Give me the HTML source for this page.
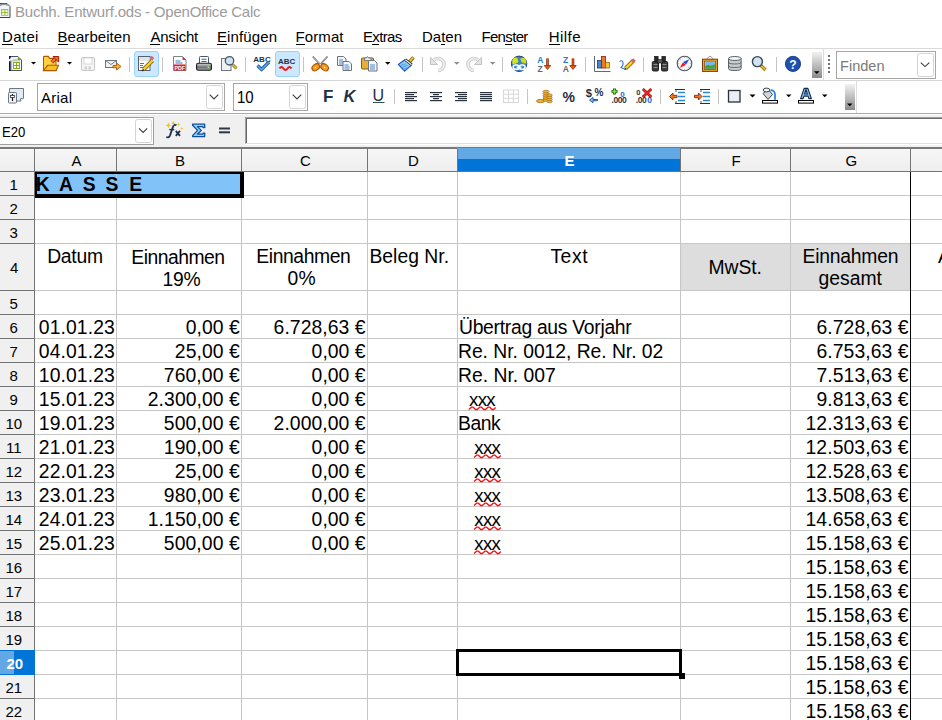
<!DOCTYPE html>
<html><head><meta charset="utf-8"><style>
html,body{margin:0;padding:0;}
body{width:942px;height:720px;overflow:hidden;position:relative;background:#fff;font-family:"Liberation Sans", sans-serif;}
body>div{position:absolute;}
.t{line-height:1;white-space:pre;}
</style></head><body>
<div style="left:0px;top:48px;width:942px;height:1px;background:#dadada"></div>
<div style="left:0px;top:80px;width:942px;height:1px;background:#d6d6d6"></div>
<div style="left:836px;top:51px;width:100px;height:28px;background:#fff;border:1px solid #a6a6a6;box-sizing:border-box"></div>
<div style="left:37px;top:83px;width:188px;height:28px;background:#fff;border:1px solid #a6a6a6;box-sizing:border-box"></div>
<div style="left:233px;top:83px;width:75px;height:28px;background:#fff;border:1px solid #a6a6a6;box-sizing:border-box"></div>
<div style="left:0px;top:113px;width:942px;height:1px;background:#a9a9a9"></div>
<div style="left:0px;top:115px;width:942px;height:32px;background:#f0f0f0"></div>
<div style="left:0px;top:117px;width:154px;height:28px;background:#fff;border:1px solid #a0a0a0;box-sizing:border-box;border-left:0"></div>
<div style="left:0px;top:114px;width:942px;height:1px;background:#ffffff"></div>
<div style="left:245px;top:117px;width:697px;height:27px;background:#fff;border-top:1px solid #a0a0a0;border-left:1px solid #a0a0a0;border-bottom:1px solid #e0e0e0;box-shadow:inset 1px 1px 0 #696969;box-sizing:border-box"></div>
<div style="left:245px;top:144px;width:697px;height:1px;background:#ffffff"></div>
<div style="left:0px;top:147px;width:942px;height:2px;background:#7a7a7a"></div>
<svg style="position:absolute;left:0;top:0" width="20" height="24" viewBox="0 0 20 24"><path d="M-1 3.5h8l3 3v11h-11z" fill="#f2f4f6" stroke="#3a4450"/><path d="M-1 6q4-3 9-1" stroke="#8a949e" stroke-width="1.5" fill="none"/><rect x="1.2" y="9.2" width="7" height="6.5" fill="#8ab51e"/><rect x="2.2" y="10.2" width="2.2" height="2" fill="#fff"/><rect x="5.4" y="10.2" width="2.2" height="2" fill="#fff"/><rect x="2.2" y="13.1" width="2.2" height="2" fill="#fff"/><rect x="5.4" y="13.1" width="2.2" height="2" fill="#fff"/></svg><svg style="position:absolute;left:0;top:48px" width="942" height="100" viewBox="0 48 942 100"><path d="M9.5 56.5h8.5l3.5 3.5v10.5h-12z" fill="#f6f8fa" stroke="#4a5560"/><rect x="9" y="56" width="1.8" height="15" fill="#0c1a2a"/><rect x="10.8" y="61" width="1.4" height="9" fill="#a8c0d8"/><path d="M10.5 57.5h7l2.5 2.5v1.5h-9.5z" fill="#c4ccd4"/><path d="M7.5 62q5-4 12-4.2M9 59.8q4-2 8-2" stroke="#fff" stroke-width="1.1" fill="none"/><path d="M18 56.5l3.5 3.5h-3.5z" fill="#7a9a20"/><rect x="13" y="62" width="7" height="7" fill="#8aae10"/><rect x="14" y="63" width="2" height="2" fill="#fff"/><rect x="17" y="63" width="2" height="2" fill="#fff"/><rect x="14" y="66" width="2" height="2" fill="#fff"/><rect x="17" y="66" width="2" height="2" fill="#fff"/><path d="M31 62h5l-2.5 2.5z" fill="#000"/><path d="M43.5 57.2q0-0.8 0.8-0.8h4.2l1 2h6.5v12h-12.5z" fill="#ffd040" stroke="#b05a00" stroke-width="1.1"/><path d="M47.6 65.3h11l-2.6 5.3h-12.5z" fill="#f8c020" stroke="#b05a00" stroke-width="1.1"/><path d="M51.8 62.2l4-4" stroke="#a02000" stroke-width="3.6"/><path d="M52 62l3.8-3.8" stroke="#f88030" stroke-width="1.8"/><path d="M53 56.5h5.7v5.7z" fill="#f07020" stroke="#a02000" stroke-width="1"/><path d="M67 62h5l-2.5 2.5z" fill="#000"/><rect x="81.5" y="57.5" width="13" height="13" rx="1.5" fill="#f4f4f4" stroke="#c8c8c8"/><rect x="84" y="58" width="8" height="6" fill="#fff" stroke="#d0d0d0" stroke-width="0.8"/><rect x="84.5" y="66.5" width="2.5" height="3" fill="#d0d0d0"/><rect x="88.5" y="66.5" width="2.5" height="3" fill="#d0d0d0"/><rect x="105.5" y="60.5" width="11" height="7" fill="#eef1f4" stroke="#6c7680"/><path d="M105.5 60.5l5.5 4 5.5-4" fill="none" stroke="#6c7680" stroke-width="0.9"/><path d="M113 65.5h3.5v-2.5l4.5 3.5-4.5 3.5v-2.3h-3.5z" fill="#f7b23a" stroke="#a85a10" stroke-width="0.9"/><rect x="129" y="57" width="1" height="15" fill="#c4c4c4"/><rect x="134.5" y="51.5" width="24" height="25" rx="2.5" fill="#cce8ff" stroke="#99d1ff"/><rect x="138.5" y="56.5" width="11.5" height="14" fill="#fff" stroke="#56606a"/><rect x="139" y="57" width="10.5" height="4" fill="#dfe4ea"/><path d="M140 63.5h4M140 65.5h3M140 67.5h4" stroke="#3a7ac8" stroke-width="1"/><path d="M143.5 69.5l9-9" stroke="#8a6a10" stroke-width="4"/><path d="M143.5 69.5l9-9" stroke="#f8d030" stroke-width="2.4"/><path d="M151 59l2-2" stroke="#e06070" stroke-width="3.5"/><path d="M142 71l1.6-1.6" stroke="#222" stroke-width="1.4"/><rect x="162" y="57" width="1" height="15" fill="#c4c4c4"/><path d="M173.5 56.5h9l3.5 3.5v10.5h-12.5z" fill="#fff" stroke="#7a8590"/><path d="M182.5 56.5l3.5 3.5h-3.5z" fill="#e03030"/><path d="M175.5 61h5M175.5 63h7" stroke="#3a7ac8" stroke-width="1"/><rect x="174" y="64.5" width="11.5" height="6" fill="#d81e1e"/><text x="179.8" y="69.8" font-size="5.2" font-weight="700" fill="#fff" text-anchor="middle" font-family="Liberation Sans">PDF</text><defs><linearGradient id="gp" x1="0" y1="0" x2="0" y2="1"><stop offset="0" stop-color="#dcdcdc"/><stop offset="0.55" stop-color="#6e7276"/><stop offset="1" stop-color="#a8aaac"/></linearGradient><linearGradient id="gh" x1="0" y1="0" x2="0" y2="1"><stop offset="0" stop-color="#f2f2f2"/><stop offset="1" stop-color="#8a8a8a"/></linearGradient><radialGradient id="gg" cx="0.4" cy="0.35" r="0.7"><stop offset="0" stop-color="#60a0e0"/><stop offset="1" stop-color="#1c4c9a"/></radialGradient></defs><rect x="199.5" y="56.5" width="9" height="8" rx="0.8" fill="#fff" stroke="#4a5a6a"/><path d="M201.5 59.3h5M201.5 61.5h5" stroke="#2a6ab0" stroke-width="1.1"/><rect x="196.6" y="63.3" width="14.8" height="7" rx="1.6" fill="url(#gp)" stroke="#1a1a1a" stroke-width="1.1"/><circle cx="208.5" cy="67.3" r="1" fill="#80ff30"/><rect x="221.5" y="58.5" width="9.5" height="12" fill="#eef2f6" stroke="#6a7580"/><path d="M232.5 64.5l4 4" stroke="#8a6a10" stroke-width="3"/><path d="M232.7 64.7l3.6 3.6" stroke="#f0c030" stroke-width="1.6"/><circle cx="229.5" cy="60.8" r="4.2" fill="#cfe3f4" stroke="#4a5866" stroke-width="1.3"/><rect x="245" y="57" width="1" height="15" fill="#c4c4c4"/><text x="262" y="62.3" font-size="8" font-weight="700" fill="#1e3246" text-anchor="middle" font-family="Liberation Sans">ABC</text><path d="M257.5 65.5l4 4 7.5-7.5" fill="none" stroke="#1e4e8e" stroke-width="3.2"/><path d="M257.5 65.5l4 4 7.5-7.5" fill="none" stroke="#5aaaf0" stroke-width="1.6"/><rect x="275.5" y="51.5" width="24" height="25" rx="2.5" fill="#cce8ff" stroke="#99d1ff"/><text x="286.7" y="63.5" font-size="8" font-weight="700" fill="#1e3246" text-anchor="middle" font-family="Liberation Sans">ABC</text><path d="M279.5 68.5q2-3 4 0t4 0t4 0" fill="none" stroke="#e81818" stroke-width="2"/><rect x="303" y="57" width="1" height="15" fill="#c4c4c4"/><path d="M312.8 56.5l6.8 7.5M327.5 56.5l-6.8 7.5" stroke="#6a7078" stroke-width="1.8"/><path d="M312.8 56.5l6.8 7.5M327.5 56.5l-6.8 7.5" stroke="#d8dce0" stroke-width="0.6"/><ellipse cx="315.8" cy="67.3" rx="4.2" ry="3" transform="rotate(-38 315.8 67.3)" fill="#f39a20" stroke="#a85000" stroke-width="1.1"/><ellipse cx="324.6" cy="67.3" rx="4.2" ry="3" transform="rotate(38 324.6 67.3)" fill="#f39a20" stroke="#a85000" stroke-width="1.1"/><circle cx="315.5" cy="67.5" r="0.8" fill="#fff"/><circle cx="324.8" cy="67.5" r="0.8" fill="#fff"/><path d="M337.5 56.5h6l2.5 2.5v6.5h-8.5z" fill="#f4f6f8" stroke="#6a7580"/><path d="M339.0 60.0h4M339.0 62.0h5M339.0 64.0h5" stroke="#3a7ac8" stroke-width="0.9"/><path d="M343 61.5h6l2.5 2.5v6.5h-8.5z" fill="#f4f6f8" stroke="#6a7580"/><path d="M344.5 65.0h4M344.5 67.0h5M344.5 69.0h5" stroke="#3a7ac8" stroke-width="0.9"/><rect x="361.5" y="58" width="12" height="11" rx="1" fill="#e8b030" stroke="#8a5a10"/><path d="M364.5 60.5h7l-1-2.5h-1.8l-1.2-1.5-1.2 1.5h-1.8z" fill="#eaeaea" stroke="#606a74" stroke-width="0.8"/><path d="M368.5 60.5h6l2.5 2.5v8h-8.5z" fill="#f4f6f8" stroke="#6a7580"/><path d="M370 65h5M370 67h5M370 69h5" stroke="#3a7ac8" stroke-width="0.9"/><path d="M385 62h5.5l-2.75 2.75z" fill="#000"/><path d="M409.5 61.8l4-4.5" stroke="#7a5a08" stroke-width="3.4"/><path d="M409.6 61.7l3.8-4.3" stroke="#f0c030" stroke-width="1.8"/><path d="M398.3 64.4l6.6-4.7 6.6 5.4-6.9 6.1z" fill="#8ccaf4" stroke="#1050c0" stroke-width="1.1" stroke-linejoin="round"/><path d="M400.5 65.5l5 -1.5M401.5 67.5l6-2M403 69.3l5-1.5" stroke="#4a90e0" stroke-width="0.8"/><path d="M405.2 59.4l6.6 5.4" stroke="#1a1a1a" stroke-width="2.6"/><path d="M405.4 59.7l6.2 5" stroke="#f0f0f0" stroke-width="1.2"/><rect x="422" y="57" width="1" height="15" fill="#c4c4c4"/><path d="M432 64.5a6 6 0 1 1 6 6" fill="none" stroke="#c8c8c8" stroke-width="3.6"/><path d="M432 64.5a6 6 0 1 1 6 6" fill="none" stroke="#ececec" stroke-width="2"/><path d="M430.5 57.5v7h7z" fill="#e4e4e4" stroke="#c4c4c4"/><path d="M454 62h5.5l-2.75 2.75z" fill="#8c8c8c"/><path d="M480 64.5a6 6 0 1 0 -6 6" fill="none" stroke="#c8c8c8" stroke-width="3.6"/><path d="M480 64.5a6 6 0 1 0 -6 6" fill="none" stroke="#ececec" stroke-width="2"/><path d="M481.5 57.5v7h-7z" fill="#e4e4e4" stroke="#c4c4c4"/><path d="M490 62h5.5l-2.75 2.75z" fill="#8c8c8c"/><rect x="502" y="57" width="1" height="15" fill="#c4c4c4"/><circle cx="519.1" cy="63.8" r="7.7" fill="#3c82c8" stroke="#10386a" stroke-width="0.9"/><path d="M513 58.5q2-1.5 4-1 1 2 1.5 4.5 -2 1.8-6 2.2q-1-3 0.5-5.7z" fill="#d4e418"/><path d="M520.5 58.5q3-1.5 5 0.5 1.2 2 1 4.5q-3 0-5 -1.2-1-2-1-3.8z" fill="#c8dc20"/><rect x="513.2" y="65" width="5.6" height="4.4" rx="2.2" fill="none" stroke="#fff" stroke-width="1.7"/><rect x="519.4" y="65" width="5.6" height="4.4" rx="2.2" fill="none" stroke="#fff" stroke-width="1.7"/><path d="M516.5 67.2h5" stroke="#fff" stroke-width="1.4"/><text x="540.2" y="62.6" font-size="8.5" font-weight="700" fill="#1a78d8" text-anchor="middle" font-family="Liberation Sans">A</text><text x="540.2" y="71.6" font-size="8.5" font-weight="700" fill="#5e666e" text-anchor="middle" font-family="Liberation Sans">Z</text><path d="M547.5 58.5v8" stroke="#8a2a08" stroke-width="2.6"/><path d="M547.5 58.5v8" stroke="#f05a10" stroke-width="1.2"/><path d="M544.3 65.5h6.4l-3.2 4z" fill="#f05a10" stroke="#8a2a08" stroke-width="0.8"/><text x="565.7" y="62.6" font-size="8.5" font-weight="700" fill="#1a78d8" text-anchor="middle" font-family="Liberation Sans">Z</text><text x="565.7" y="71.6" font-size="8.5" font-weight="700" fill="#5e666e" text-anchor="middle" font-family="Liberation Sans">A</text><path d="M573.0 58.5v8" stroke="#8a2a08" stroke-width="2.6"/><path d="M573.0 58.5v8" stroke="#f05a10" stroke-width="1.2"/><path d="M569.8 65.5h6.4l-3.2 4z" fill="#f05a10" stroke="#8a2a08" stroke-width="0.8"/><rect x="585" y="57" width="1" height="15" fill="#c4c4c4"/><path d="M594.5 56v15.5h16" fill="none" stroke="#606a74" stroke-width="1"/><rect x="597.5" y="60.5" width="4" height="7.5" fill="#4a88c8" stroke="#1e3a60" stroke-width="0.8"/><rect x="601.5" y="56.5" width="4" height="11.5" fill="#f07820" stroke="#902010" stroke-width="0.8"/><rect x="605.5" y="62.5" width="4" height="5.5" fill="#f8c830" stroke="#906010" stroke-width="0.8"/><path d="M619.5 61.5q3-2 3.5 1t-2 5q3 2 5 1" fill="none" stroke="#3a7ad8" stroke-width="1.1"/><path d="M625.5 68.5l8-8" stroke="#8a6a10" stroke-width="4"/><path d="M625.5 68.5l8-8" stroke="#f8d030" stroke-width="2.4"/><path d="M632 62l2.5-2.5" stroke="#e06070" stroke-width="3.5"/><path d="M624.8 69.7l1.2-1.2" stroke="#222" stroke-width="1.2"/><rect x="643" y="57" width="1" height="15" fill="#c4c4c4"/><rect x="652.3" y="61.5" width="6.2" height="9.5" rx="1.3" fill="#3a3c3e" stroke="#101010" stroke-width="0.9"/><rect x="661.5" y="61.5" width="6.2" height="9.5" rx="1.3" fill="#3a3c3e" stroke="#101010" stroke-width="0.9"/><rect x="654.5" y="56.3" width="3.6" height="5.5" fill="#2a2a2a" stroke="#101010" stroke-width="0.6"/><rect x="661.9" y="56.3" width="3.6" height="5.5" fill="#2a2a2a" stroke="#101010" stroke-width="0.6"/><rect x="657.5" y="59.5" width="5" height="3.5" fill="#5a5a5a" stroke="#101010" stroke-width="0.6"/><path d="M653.5 64.5h4M662.5 64.5h4M653.5 67.5h4M662.5 67.5h4" stroke="#9a9a9a" stroke-width="0.9"/><circle cx="684.5" cy="63.5" r="7.3" fill="#f2f4f6" stroke="#4a545e" stroke-width="1.1"/><path d="M680.4 59.3v1M688.6 67.7v-1M677.8 63.5h1M691.2 63.5h-1M684.5 56.8v1M684.5 70.2v-1" stroke="#8a949e" stroke-width="0.7"/><path d="M689.2 59.2L686 64.8 683.2 62z" fill="#1a50e0"/><path d="M679.8 67.8L683 62.2 685.8 65z" fill="#f01818"/><path d="M706.5 59l3.5-3 3.5 3" fill="none" stroke="#7a7a7a" stroke-width="0.8"/><rect x="702.5" y="59.2" width="15" height="12.2" fill="#e8a830" stroke="#7a3a08"/><rect x="704.5" y="61.2" width="11" height="8.2" fill="#fff0b0" stroke="#8a4a10" stroke-width="0.8"/><rect x="705.2" y="61.8" width="9.6" height="7" fill="#78b8f0"/><path d="M705.2 66q2.5-1.5 4.5-0.5t5.1-1.5v4.8h-9.6z" fill="#48a030"/><path d="M728.5 58.5v10q0 2 6.3 2t6.3-2v-10" fill="#c8ccd0" stroke="#5a6066"/><ellipse cx="734.8" cy="58.5" rx="6.3" ry="2" fill="#f0f2f4" stroke="#5a6066"/><path d="M728.5 62q0 2 6.3 2t6.3-2M728.5 65.5q0 2 6.3 2t6.3-2" fill="none" stroke="#5a6066" stroke-width="0.9"/><path d="M760.5 65l5 5" stroke="#8a6a10" stroke-width="3.2"/><path d="M760.7 65.2l4.6 4.6" stroke="#f0c030" stroke-width="1.6"/><circle cx="757.4" cy="61.6" r="5" fill="#cfe3f4" stroke="#3a4856" stroke-width="1.4"/><rect x="776" y="57" width="1" height="15" fill="#c4c4c4"/><circle cx="793" cy="63.9" r="7.6" fill="#1e50b0" stroke="#0c2e78" stroke-width="0.8"/><text x="793" y="68.6" font-size="12" font-weight="700" fill="#fff" text-anchor="middle" font-family="Liberation Sans">?</text><rect x="812" y="52" width="10" height="26" fill="url(#gh)"/><path d="M814 71.3h5.5l-2.75 2.75z" fill="#000"/><rect x="823" y="48" width="1" height="32" fill="#dcdcdc"/><rect x="828" y="55" width="2" height="2" fill="#707070"/><rect x="828" y="59" width="2" height="2" fill="#707070"/><rect x="828" y="63" width="2" height="2" fill="#707070"/><rect x="828" y="67" width="2" height="2" fill="#707070"/><rect x="828" y="71" width="2" height="2" fill="#707070"/><rect x="917.5" y="53.5" width="16" height="23" rx="2" fill="#fff" stroke="#d4d4d4"/><path d="M920.8 62.6L925 66.6L929.3 62.6" fill="none" stroke="#3c3c3c" stroke-width="1.1"/><path d="M9.5 88.5h14v9.5l-3 3h-11z" fill="#e4eaf0" stroke="#6a7888"/><path d="M20.5 101.5v-3h3" fill="#fff" stroke="#6a7888" stroke-width="0.8"/><rect x="8.5" y="92.5" width="8" height="10.5" rx="0.8" fill="#f0f2f4" stroke="#6a7888"/><path d="M12.5 94v7" stroke="#1a1a1a" stroke-width="1.2"/><rect x="10.5" y="95.5" width="4" height="2" fill="#fff" stroke="#333" stroke-width="0.8"/><rect x="206.5" y="85.5" width="16" height="23" rx="2" fill="#fff" stroke="#d4d4d4"/><path d="M209.7 94.6L214.0 98.9L218.3 94.6" fill="none" stroke="#3c3c3c" stroke-width="1.1"/><rect x="289.5" y="85.5" width="16" height="23" rx="2" fill="#fff" stroke="#d4d4d4"/><path d="M292.7 94.6L297.0 98.9L301.3 94.6" fill="none" stroke="#3c3c3c" stroke-width="1.1"/><text x="323" y="101.8" font-size="17" font-weight="700" fill="#1c3048" font-family="Liberation Sans">F</text><text x="343.5" y="101.8" font-size="16.5" font-style="italic" font-weight="700" fill="#1c3048" font-family="Liberation Sans">K</text><text x="372.5" y="101.3" font-size="16" fill="#1c3048" font-family="Liberation Sans">U</text><rect x="373" y="102" width="11.5" height="1" fill="#2a4a60"/><rect x="394" y="89" width="1" height="15" fill="#c4c4c4"/><rect x="405" y="92" width="12" height="1.2" fill="#28323c"/><rect x="405" y="94" width="9" height="1.2" fill="#28323c"/><rect x="405" y="96" width="12" height="1.2" fill="#28323c"/><rect x="405" y="98" width="9" height="1.2" fill="#28323c"/><rect x="405" y="100" width="12" height="1.2" fill="#28323c"/><rect x="430" y="92" width="12" height="1.2" fill="#28323c"/><rect x="433" y="94" width="6" height="1.2" fill="#28323c"/><rect x="430" y="96" width="12" height="1.2" fill="#28323c"/><rect x="433" y="98" width="6" height="1.2" fill="#28323c"/><rect x="430" y="100" width="12" height="1.2" fill="#28323c"/><rect x="455" y="92" width="12" height="1.2" fill="#28323c"/><rect x="458" y="94" width="9" height="1.2" fill="#28323c"/><rect x="455" y="96" width="12" height="1.2" fill="#28323c"/><rect x="458" y="98" width="9" height="1.2" fill="#28323c"/><rect x="455" y="100" width="12" height="1.2" fill="#28323c"/><rect x="480" y="92" width="12" height="1.2" fill="#28323c"/><rect x="480" y="94" width="12" height="1.2" fill="#28323c"/><rect x="480" y="96" width="12" height="1.2" fill="#28323c"/><rect x="480" y="98" width="12" height="1.2" fill="#28323c"/><rect x="480" y="100" width="12" height="1.2" fill="#28323c"/><rect x="503.5" y="90" width="15" height="12.5" fill="#fff" stroke="#d8d8d8"/><path d="M503.5 94.2h15M503.5 98.4h15M508.5 90v12.5M513.5 90v12.5" stroke="#d8d8d8" stroke-width="1"/><rect x="527" y="89" width="1" height="15" fill="#c4c4c4"/><ellipse cx="540.5" cy="101" rx="4" ry="1.6" fill="#f0b830" stroke="#a06010" stroke-width="0.8"/><ellipse cx="546" cy="100.0" rx="3" ry="1.3" fill="#f4c030" stroke="#a06010" stroke-width="0.7"/><ellipse cx="546" cy="97.9" rx="3" ry="1.3" fill="#f4c030" stroke="#a06010" stroke-width="0.7"/><ellipse cx="546" cy="95.8" rx="3" ry="1.3" fill="#f4c030" stroke="#a06010" stroke-width="0.7"/><ellipse cx="546" cy="93.7" rx="3" ry="1.3" fill="#f4c030" stroke="#a06010" stroke-width="0.7"/><ellipse cx="546" cy="91.6" rx="3" ry="1.3" fill="#f4c030" stroke="#a06010" stroke-width="0.7"/><ellipse cx="549.5" cy="101.5" rx="2.7" ry="1.2" fill="#f4c030" stroke="#a06010" stroke-width="0.7"/><ellipse cx="549.5" cy="99.4" rx="2.7" ry="1.2" fill="#f4c030" stroke="#a06010" stroke-width="0.7"/><ellipse cx="549.5" cy="97.3" rx="2.7" ry="1.2" fill="#f4c030" stroke="#a06010" stroke-width="0.7"/><ellipse cx="549.5" cy="95.2" rx="2.7" ry="1.2" fill="#f4c030" stroke="#a06010" stroke-width="0.7"/><text x="562.5" y="101.5" font-size="14" font-weight="700" fill="#1c3048" font-family="Liberation Sans">%</text><text x="585.8" y="96.6" font-size="11" font-weight="700" fill="#1c3048" font-family="Liberation Sans">$</text><text x="594.5" y="96.3" font-size="10" font-weight="700" fill="#1c3048" font-family="Liberation Sans">%</text><path d="M597.5 99.5h-4.5v-2l-3.5 2.6 3.5 2.6v-2h4.5z" fill="#8ac8f8" stroke="#1a4a90" stroke-width="0.9"/><path d="M614.5 88.5v6M611.5 91.5h6" stroke="#1a6a10" stroke-width="3"/><path d="M614.5 89.3v4.4M612.3 91.5h4.4" stroke="#8ae040" stroke-width="1.4"/><text x="620.2" y="96.6" font-size="8" font-weight="700" fill="#2a6ad0" font-family="Liberation Sans">0</text><text x="611.5" y="103.3" font-size="8.5" font-weight="700" fill="#2a3440" font-family="Liberation Sans" letter-spacing="-0.4">.000</text><text x="636.2" y="95.3" font-size="7.5" font-weight="700" fill="#2a3440" font-family="Liberation Sans">0</text><text x="635.8" y="103.3" font-size="8.5" font-weight="700" fill="#2a3440" font-family="Liberation Sans" letter-spacing="-0.4">.00</text><text x="647.3" y="103.3" font-size="8.5" font-weight="700" fill="#2a6ad0" font-family="Liberation Sans">0</text><path d="M642.8 89l8.5 8M651.3 89l-8.5 8" stroke="#a01010" stroke-width="2.8"/><path d="M642.8 89l8.5 8M651.3 89l-8.5 8" stroke="#f82828" stroke-width="1.4"/><rect x="660" y="89" width="1" height="15" fill="#c4c4c4"/><path d="M675 89.5h10M675 103.5h10" stroke="#28323c" stroke-width="1"/><path d="M678 92.5h7M678 96.5h7M678 100.5h7" stroke="#2a88d8" stroke-width="1.6"/><path d="M676 89v3M676 101v3" stroke="#28323c" stroke-width="0.8"/><path d="M677 95.3h-4v-2.3l-3.5 3.5 3.5 3.5v-2.3h4z" fill="#f07a20" stroke="#8a2a08" stroke-width="0.9"/><path d="M700 89.5h10M700 103.5h10" stroke="#28323c" stroke-width="1"/><path d="M703 92.5h7M703 96.5h7M703 100.5h7" stroke="#2a88d8" stroke-width="1.6"/><path d="M701 89v3M701 101v3" stroke="#28323c" stroke-width="0.8"/><path d="M694.5 95.3h4v-2.3l3.5 3.5-3.5 3.5v-2.3h-4z" fill="#f07a20" stroke="#8a2a08" stroke-width="0.9"/><rect x="718" y="89" width="1" height="15" fill="#c4c4c4"/><rect x="728.5" y="90.5" width="11.5" height="11.5" fill="#e8eef4" stroke="#28323c" stroke-width="1.3"/><path d="M749.5 94.5h6.0l-3.0 3.0z" fill="#000"/><path d="M763 93.5l5-4.5 4.5 5.5-4.5 5z" fill="#d0d4d8" stroke="#3a444e" stroke-width="1"/><path d="M770.5 90.2q4 0 4.5 4v5.5" fill="none" stroke="#2a88d8" stroke-width="1.8"/><ellipse cx="766.5" cy="90" rx="3.3" ry="1.9" fill="#f0f2f4" stroke="#3a444e" stroke-width="1"/><rect x="762.5" y="100.5" width="15" height="2.6" fill="#fff" stroke="#000" stroke-width="1"/><path d="M786 94.5h5.5l-2.75 2.75z" fill="#000"/><path d="M800.6 98.6L804.1 88.4H807.9L811.4 98.6H808.9L808.1 96.1H803.9L803.1 98.6Z M804.6 94H807.4L806 89.6Z" fill="#8ab8e8" fill-rule="evenodd" stroke="#0c2a50" stroke-width="1.1" stroke-linejoin="round"/><rect x="798.5" y="100.5" width="15" height="2.6" fill="#fff" stroke="#000" stroke-width="1"/><path d="M822 94.5h5.5l-2.75 2.75z" fill="#000"/><rect x="845" y="84" width="10" height="26" fill="url(#gh)"/><path d="M847 103.5h5.5l-2.75 2.75z" fill="#000"/><rect x="856" y="80" width="1" height="33" fill="#dcdcdc"/><rect x="135.5" y="119.5" width="16" height="23" rx="2" fill="#fff" stroke="#d4d4d4"/><path d="M139 128.4L143.1 132.5L147.2 128.4" fill="none" stroke="#3c3c3c" stroke-width="1.1"/><path d="M176.5 125.3Q174 123.8 172.8 127.2L170 135.5Q169 138.2 166.3 137" fill="none" stroke="#1c3048" stroke-width="1.9"/><path d="M169.3 129.6h5" stroke="#1c3048" stroke-width="1.4"/><path d="M175.8 130.8l4.2 5M180 130.8l-4.2 5" stroke="#1c3048" stroke-width="1.8"/><path d="M168.4 122.60000000000001L169.296 124.504L171.20000000000002 125.4L169.296 126.296L168.4 128.20000000000002L167.50400000000002 126.296L165.6 125.4L167.50400000000002 124.504z" fill="#f8c020"/><path d="M173.4 121.0L174.136 122.564L175.70000000000002 123.3L174.136 124.036L173.4 125.6L172.66400000000002 124.036L171.1 123.3L172.66400000000002 122.564z" fill="#f8c020"/><path d="M178.5 122.5L179.108 123.792L180.4 124.4L179.108 125.00800000000001L178.5 126.30000000000001L177.892 125.00800000000001L176.6 124.4L177.892 123.792z" fill="#f8c020"/><path d="M181.8 126.9L182.28 127.92L183.3 128.4L182.28 128.88L181.8 129.9L181.32000000000002 128.88L180.3 128.4L181.32000000000002 127.92z" fill="#f8c020"/><path d="M192.6 124.2H204.6L204.8 127.6H203.2L202.6 126.6H197.4L201.3 130.4L197.4 134.2H202.6L203.2 133.2H204.8L204.6 136.6H192.6L192.6 135.6L197.6 130.4L192.6 125.2z" fill="#8ed4ff" stroke="#0c4e9e" stroke-width="1.3" stroke-linejoin="round"/><rect x="219" y="127.5" width="11" height="2" fill="#2a3848"/><rect x="219" y="131.3" width="11" height="2" fill="#2a3848"/></svg>
<div style="left:0px;top:149px;width:942px;height:22px;background:linear-gradient(#f6f6f6,#eeeeee)"></div>
<div style="left:0px;top:171px;width:942px;height:1px;background:#747474"></div>
<div style="left:457px;top:148px;width:223px;height:11px;background:#62a8e5"></div>
<div style="left:457px;top:159px;width:223px;height:12px;background:#0074d7"></div>
<div style="left:34px;top:149px;width:1px;height:22px;background:#747474"></div>
<div style="left:116px;top:149px;width:1px;height:22px;background:#747474"></div>
<div style="left:241px;top:149px;width:1px;height:22px;background:#747474"></div>
<div style="left:367px;top:149px;width:1px;height:22px;background:#747474"></div>
<div style="left:457px;top:149px;width:1px;height:22px;background:#747474"></div>
<div style="left:680px;top:149px;width:1px;height:22px;background:#747474"></div>
<div style="left:790px;top:149px;width:1px;height:22px;background:#747474"></div>
<div style="left:910px;top:149px;width:1px;height:22px;background:#747474"></div>
<div style="left:0px;top:172px;width:34px;height:548px;background:#f0f0f0"></div>
<div style="left:34px;top:172px;width:1px;height:548px;background:#747474"></div>
<div style="left:0px;top:195px;width:34px;height:1px;background:#747474"></div>
<div style="left:35px;top:195px;width:907px;height:1px;background:#c6c6c6"></div>
<div style="left:0px;top:219px;width:34px;height:1px;background:#747474"></div>
<div style="left:35px;top:219px;width:907px;height:1px;background:#c6c6c6"></div>
<div style="left:0px;top:243px;width:34px;height:1px;background:#747474"></div>
<div style="left:35px;top:243px;width:907px;height:1px;background:#c6c6c6"></div>
<div style="left:0px;top:290px;width:34px;height:1px;background:#747474"></div>
<div style="left:35px;top:290px;width:907px;height:1px;background:#c6c6c6"></div>
<div style="left:0px;top:314px;width:34px;height:1px;background:#747474"></div>
<div style="left:35px;top:314px;width:907px;height:1px;background:#c6c6c6"></div>
<div style="left:0px;top:338px;width:34px;height:1px;background:#747474"></div>
<div style="left:35px;top:338px;width:907px;height:1px;background:#c6c6c6"></div>
<div style="left:0px;top:362px;width:34px;height:1px;background:#747474"></div>
<div style="left:35px;top:362px;width:907px;height:1px;background:#c6c6c6"></div>
<div style="left:0px;top:386px;width:34px;height:1px;background:#747474"></div>
<div style="left:35px;top:386px;width:907px;height:1px;background:#c6c6c6"></div>
<div style="left:0px;top:410px;width:34px;height:1px;background:#747474"></div>
<div style="left:35px;top:410px;width:907px;height:1px;background:#c6c6c6"></div>
<div style="left:0px;top:434px;width:34px;height:1px;background:#747474"></div>
<div style="left:35px;top:434px;width:907px;height:1px;background:#c6c6c6"></div>
<div style="left:0px;top:458px;width:34px;height:1px;background:#747474"></div>
<div style="left:35px;top:458px;width:907px;height:1px;background:#c6c6c6"></div>
<div style="left:0px;top:482px;width:34px;height:1px;background:#747474"></div>
<div style="left:35px;top:482px;width:907px;height:1px;background:#c6c6c6"></div>
<div style="left:0px;top:506px;width:34px;height:1px;background:#747474"></div>
<div style="left:35px;top:506px;width:907px;height:1px;background:#c6c6c6"></div>
<div style="left:0px;top:530px;width:34px;height:1px;background:#747474"></div>
<div style="left:35px;top:530px;width:907px;height:1px;background:#c6c6c6"></div>
<div style="left:0px;top:554px;width:34px;height:1px;background:#747474"></div>
<div style="left:35px;top:554px;width:907px;height:1px;background:#c6c6c6"></div>
<div style="left:0px;top:578px;width:34px;height:1px;background:#747474"></div>
<div style="left:35px;top:578px;width:907px;height:1px;background:#c6c6c6"></div>
<div style="left:0px;top:602px;width:34px;height:1px;background:#747474"></div>
<div style="left:35px;top:602px;width:907px;height:1px;background:#c6c6c6"></div>
<div style="left:0px;top:626px;width:34px;height:1px;background:#747474"></div>
<div style="left:35px;top:626px;width:907px;height:1px;background:#c6c6c6"></div>
<div style="left:0px;top:650px;width:34px;height:1px;background:#747474"></div>
<div style="left:35px;top:650px;width:907px;height:1px;background:#c6c6c6"></div>
<div style="left:0px;top:674px;width:34px;height:1px;background:#747474"></div>
<div style="left:35px;top:674px;width:907px;height:1px;background:#c6c6c6"></div>
<div style="left:0px;top:698px;width:34px;height:1px;background:#747474"></div>
<div style="left:35px;top:698px;width:907px;height:1px;background:#c6c6c6"></div>
<div style="left:0px;top:722px;width:34px;height:1px;background:#747474"></div>
<div style="left:35px;top:722px;width:907px;height:1px;background:#c6c6c6"></div>
<div style="left:116px;top:172px;width:1px;height:548px;background:#c6c6c6"></div>
<div style="left:241px;top:172px;width:1px;height:548px;background:#c6c6c6"></div>
<div style="left:367px;top:172px;width:1px;height:548px;background:#c6c6c6"></div>
<div style="left:457px;top:172px;width:1px;height:548px;background:#c6c6c6"></div>
<div style="left:680px;top:172px;width:1px;height:548px;background:#c6c6c6"></div>
<div style="left:790px;top:172px;width:1px;height:548px;background:#c6c6c6"></div>
<div style="left:910px;top:172px;width:1px;height:548px;background:#c6c6c6"></div>
<div style="left:0px;top:650px;width:35px;height:25px;background:#0074d7"></div>
<div style="left:0px;top:651px;width:14px;height:23px;background:#62a8e5"></div>
<div style="left:681px;top:244px;width:229px;height:46px;background:#dddddd"></div>
<div style="left:790px;top:244px;width:1px;height:46px;background:#c6c6c6"></div>
<div style="left:910px;top:172px;width:1px;height:548px;background:#000"></div>
<div style="left:35px;top:172px;width:209px;height:26px;background:#81c3f9;border-left:2px solid #000;border-top:2px solid #000;border-right:4px solid #000;border-bottom:4px solid #000;box-sizing:border-box"></div>
<div style="left:116px;top:174px;width:1px;height:20px;background:#b8c8d8"></div>
<svg style="position:absolute;left:0;top:0" width="942" height="720" viewBox="0 0 942 720"><path d="M468.8 409.5 L471.4 407.2 H473.2 L475.5 409.5 H477.1 L479.7 407.2 H481.5 L483.8 409.5 H485.4 L488.0 407.2 H489.8 L492.1 409.5 H493.7 L495.6 407.5" fill="none" stroke="#ff1010" stroke-width="1.3"/></svg>
<svg style="position:absolute;left:0;top:0" width="942" height="720" viewBox="0 0 942 720"><path d="M474.0 457.5 L476.6 455.2 H478.4 L480.7 457.5 H482.3 L484.9 455.2 H486.7 L489.0 457.5 H490.6 L493.2 455.2 H495.0 L497.3 457.5 H498.9 L500.8 455.5" fill="none" stroke="#ff1010" stroke-width="1.3"/></svg>
<svg style="position:absolute;left:0;top:0" width="942" height="720" viewBox="0 0 942 720"><path d="M474.0 481.5 L476.6 479.2 H478.4 L480.7 481.5 H482.3 L484.9 479.2 H486.7 L489.0 481.5 H490.6 L493.2 479.2 H495.0 L497.3 481.5 H498.9 L500.8 479.5" fill="none" stroke="#ff1010" stroke-width="1.3"/></svg>
<svg style="position:absolute;left:0;top:0" width="942" height="720" viewBox="0 0 942 720"><path d="M474.0 505.5 L476.6 503.2 H478.4 L480.7 505.5 H482.3 L484.9 503.2 H486.7 L489.0 505.5 H490.6 L493.2 503.2 H495.0 L497.3 505.5 H498.9 L500.8 503.5" fill="none" stroke="#ff1010" stroke-width="1.3"/></svg>
<svg style="position:absolute;left:0;top:0" width="942" height="720" viewBox="0 0 942 720"><path d="M474.0 529.5 L476.6 527.2 H478.4 L480.7 529.5 H482.3 L484.9 527.2 H486.7 L489.0 529.5 H490.6 L493.2 527.2 H495.0 L497.3 529.5 H498.9 L500.8 527.5" fill="none" stroke="#ff1010" stroke-width="1.3"/></svg>
<svg style="position:absolute;left:0;top:0" width="942" height="720" viewBox="0 0 942 720"><path d="M474.0 553.5 L476.6 551.2 H478.4 L480.7 553.5 H482.3 L484.9 551.2 H486.7 L489.0 553.5 H490.6 L493.2 551.2 H495.0 L497.3 553.5 H498.9 L500.8 551.5" fill="none" stroke="#ff1010" stroke-width="1.3"/></svg>
<div style="left:456px;top:649px;width:226px;height:27px;border:3px solid #000;box-sizing:border-box"></div>
<div style="left:679px;top:673px;width:6px;height:6px;background:#000"></div>
<div class="t" style="left:15px;top:4px;font-size:15px;font-weight:400;letter-spacing:-0.217px;color:#9b9b9b;">Buchh. Entwurf.ods - OpenOffice Calc</div>
<div class="t" style="left:2px;top:29px;font-size:15px;font-weight:400;letter-spacing:0.35px;color:#000;">Datei</div>
<div style="left:2px;top:44px;width:11px;height:1px;background:#000"></div>
<div class="t" style="left:57.5px;top:29px;font-size:15px;font-weight:400;letter-spacing:0.056px;color:#000;">Bearbeiten</div>
<div style="left:58px;top:44px;width:10px;height:1px;background:#000"></div>
<div class="t" style="left:150.5px;top:29px;font-size:15px;font-weight:400;letter-spacing:-0.25px;color:#000;">Ansicht</div>
<div style="left:150px;top:44px;width:10px;height:1px;background:#000"></div>
<div class="t" style="left:217px;top:29px;font-size:15px;font-weight:400;letter-spacing:0.114px;color:#000;">Einfügen</div>
<div style="left:217px;top:44px;width:10px;height:1px;background:#000"></div>
<div class="t" style="left:295.5px;top:29px;font-size:15px;font-weight:400;letter-spacing:0.1px;color:#000;">Format</div>
<div style="left:296px;top:44px;width:9px;height:1px;background:#000"></div>
<div class="t" style="left:363px;top:29px;font-size:15px;font-weight:400;letter-spacing:-0.64px;color:#000;">Extras</div>
<div style="left:372px;top:44px;width:7px;height:1px;background:#000"></div>
<div class="t" style="left:422px;top:29px;font-size:15px;font-weight:400;letter-spacing:0.0px;color:#000;">Daten</div>
<div style="left:441px;top:44px;width:4px;height:1px;background:#000"></div>
<div class="t" style="left:481.4px;top:29px;font-size:15px;font-weight:400;letter-spacing:-0.65px;color:#000;">Fenster</div>
<div style="left:505px;top:44px;width:7px;height:1px;background:#000"></div>
<div class="t" style="left:548.7px;top:29px;font-size:15px;font-weight:400;letter-spacing:0.45px;color:#000;">Hilfe</div>
<div style="left:549px;top:44px;width:11px;height:1px;background:#000"></div>
<div class="t" style="left:839.73px;top:58px;font-size:15px;font-weight:400;color:#7a7a7a;transform:scaleX(0.9705);transform-origin:0 0;">Finden</div>
<div class="t" style="left:41px;top:90px;font-size:15px;font-weight:400;letter-spacing:0.25px;color:#000;">Arial</div>
<div class="t" style="left:237.06px;top:90px;font-size:16px;font-weight:400;color:#000;transform:scaleX(0.9375);transform-origin:0 0;">10</div>
<div class="t" style="left:2.15px;top:124px;font-size:15.5px;font-weight:400;color:#000;transform:scaleX(0.8462);transform-origin:0 0;">E20</div>
<div class="t" style="left:71.5px;top:153px;font-size:15px;font-weight:400;letter-spacing:0px;color:#000;">A</div>
<div class="t" style="left:175.0px;top:153px;font-size:15px;font-weight:400;letter-spacing:0px;color:#000;">B</div>
<div class="t" style="left:300.0px;top:153px;font-size:15px;font-weight:400;letter-spacing:0px;color:#000;">C</div>
<div class="t" style="left:408.0px;top:153px;font-size:15px;font-weight:400;letter-spacing:0px;color:#000;">D</div>
<div class="t" style="left:564.5px;top:153px;font-size:15px;font-weight:700;letter-spacing:0px;color:#fff;">E</div>
<div class="t" style="left:731.5px;top:153px;font-size:15px;font-weight:400;letter-spacing:0px;color:#000;">F</div>
<div class="t" style="left:845.5px;top:153px;font-size:15px;font-weight:400;letter-spacing:0px;color:#000;">G</div>
<div class="t" style="left:9.5px;top:177px;font-size:15px;font-weight:400;letter-spacing:0px;color:#000;">1</div>
<div class="t" style="left:9.5px;top:201px;font-size:15px;font-weight:400;letter-spacing:0px;color:#000;">2</div>
<div class="t" style="left:9.5px;top:225px;font-size:15px;font-weight:400;letter-spacing:0px;color:#000;">3</div>
<div class="t" style="left:10.0px;top:260px;font-size:15px;font-weight:400;letter-spacing:0px;color:#000;">4</div>
<div class="t" style="left:9.5px;top:296px;font-size:15px;font-weight:400;letter-spacing:0px;color:#000;">5</div>
<div class="t" style="left:9.5px;top:320px;font-size:15px;font-weight:400;letter-spacing:0px;color:#000;">6</div>
<div class="t" style="left:9.5px;top:344px;font-size:15px;font-weight:400;letter-spacing:0px;color:#000;">7</div>
<div class="t" style="left:9.5px;top:368px;font-size:15px;font-weight:400;letter-spacing:0px;color:#000;">8</div>
<div class="t" style="left:9.5px;top:392px;font-size:15px;font-weight:400;letter-spacing:0px;color:#000;">9</div>
<div class="t" style="left:5.5px;top:416px;font-size:15px;font-weight:400;letter-spacing:0px;color:#000;">10</div>
<div class="t" style="left:6.0px;top:440px;font-size:15px;font-weight:400;letter-spacing:0px;color:#000;">11</div>
<div class="t" style="left:5.5px;top:464px;font-size:15px;font-weight:400;letter-spacing:0px;color:#000;">12</div>
<div class="t" style="left:5.5px;top:488px;font-size:15px;font-weight:400;letter-spacing:0px;color:#000;">13</div>
<div class="t" style="left:5.5px;top:512px;font-size:15px;font-weight:400;letter-spacing:0px;color:#000;">14</div>
<div class="t" style="left:5.5px;top:536px;font-size:15px;font-weight:400;letter-spacing:0px;color:#000;">15</div>
<div class="t" style="left:5.5px;top:560px;font-size:15px;font-weight:400;letter-spacing:0px;color:#000;">16</div>
<div class="t" style="left:5.5px;top:584px;font-size:15px;font-weight:400;letter-spacing:0px;color:#000;">17</div>
<div class="t" style="left:5.5px;top:608px;font-size:15px;font-weight:400;letter-spacing:0px;color:#000;">18</div>
<div class="t" style="left:5.5px;top:632px;font-size:15px;font-weight:400;letter-spacing:0px;color:#000;">19</div>
<div class="t" style="left:6.4px;top:656px;font-size:15px;font-weight:700;letter-spacing:0px;color:#fff;">20</div>
<div class="t" style="left:5.5px;top:680px;font-size:15px;font-weight:400;letter-spacing:0px;color:#000;">21</div>
<div class="t" style="left:5.5px;top:704px;font-size:15px;font-weight:400;letter-spacing:0px;color:#000;">22</div>
<div class="t" style="left:35.8px;top:175px;font-size:19.33px;font-weight:700;letter-spacing:0px;color:#000;">K</div>
<div class="t" style="left:59.1px;top:175px;font-size:19.33px;font-weight:700;letter-spacing:0px;color:#000;">A</div>
<div class="t" style="left:82.7px;top:175px;font-size:19.33px;font-weight:700;letter-spacing:0px;color:#000;">S</div>
<div class="t" style="left:105.6px;top:175px;font-size:19.33px;font-weight:700;letter-spacing:0px;color:#000;">S</div>
<div class="t" style="left:129.2px;top:175px;font-size:19.33px;font-weight:700;letter-spacing:0px;color:#000;">E</div>
<div class="t" style="left:47.2px;top:247px;font-size:19.33px;font-weight:400;letter-spacing:-0.275px;color:#000;">Datum</div>
<div class="t" style="left:131.3px;top:248px;font-size:19.33px;font-weight:400;letter-spacing:-0.5px;color:#000;">Einnahmen</div>
<div class="t" style="left:162.6px;top:269.5px;font-size:19.33px;font-weight:400;letter-spacing:-0.35px;color:#000;">19%</div>
<div class="t" style="left:256.3px;top:247px;font-size:19.33px;font-weight:400;letter-spacing:-0.412px;color:#000;">Einnahmen</div>
<div class="t" style="left:287.6px;top:268.5px;font-size:19.33px;font-weight:400;letter-spacing:0.2px;color:#000;">0%</div>
<div class="t" style="left:369.4px;top:247px;font-size:19.33px;font-weight:400;letter-spacing:0.025px;color:#000;">Beleg Nr.</div>
<div class="t" style="left:550.4px;top:247px;font-size:19.33px;font-weight:400;letter-spacing:0.567px;color:#000;">Text</div>
<div class="t" style="left:708.5px;top:258px;font-size:19.33px;font-weight:400;letter-spacing:-0.075px;color:#000;">MwSt.</div>
<div class="t" style="left:802.5px;top:247px;font-size:19.33px;font-weight:400;letter-spacing:-0.225px;color:#000;">Einnahmen</div>
<div class="t" style="left:818.5px;top:269.2px;font-size:19.33px;font-weight:400;letter-spacing:0.02px;color:#000;">gesamt</div>
<div class="t" style="left:938px;top:247px;font-size:19.33px;font-weight:400;letter-spacing:0px;color:#000;">A</div>
<div class="t" style="left:38.8px;top:318px;font-size:19.33px;font-weight:400;letter-spacing:0.107px;color:#000;">01.01.23</div>
<div class="t" style="left:185.8px;top:318px;font-size:19.33px;font-weight:400;letter-spacing:0.05px;color:#000;">0,00 €</div>
<div class="t" style="left:273.6px;top:318px;font-size:19.33px;font-weight:400;letter-spacing:0.071px;color:#000;">6.728,63 €</div>
<div class="t" style="left:459px;top:318px;font-size:19.33px;font-weight:400;letter-spacing:-0.295px;color:#000;">Übertrag aus Vorjahr</div>
<div class="t" style="left:816.5px;top:318px;font-size:19.33px;font-weight:400;letter-spacing:0.071px;color:#000;">6.728,63 €</div>
<div class="t" style="left:38.8px;top:342px;font-size:19.33px;font-weight:400;letter-spacing:0.107px;color:#000;">04.01.23</div>
<div class="t" style="left:174.8px;top:342px;font-size:19.33px;font-weight:400;letter-spacing:0.083px;color:#000;">25,00 €</div>
<div class="t" style="left:311.6px;top:342px;font-size:19.33px;font-weight:400;letter-spacing:0.05px;color:#000;">0,00 €</div>
<div class="t" style="left:458px;top:342px;font-size:19.33px;font-weight:400;letter-spacing:-0.043px;color:#000;">Re. Nr. 0012, Re. Nr. 02</div>
<div class="t" style="left:816.5px;top:342px;font-size:19.33px;font-weight:400;letter-spacing:0.071px;color:#000;">6.753,63 €</div>
<div class="t" style="left:38.8px;top:366px;font-size:19.33px;font-weight:400;letter-spacing:0.107px;color:#000;">10.01.23</div>
<div class="t" style="left:163.8px;top:366px;font-size:19.33px;font-weight:400;letter-spacing:0.107px;color:#000;">760,00 €</div>
<div class="t" style="left:311.6px;top:366px;font-size:19.33px;font-weight:400;letter-spacing:0.05px;color:#000;">0,00 €</div>
<div class="t" style="left:458px;top:366px;font-size:19.33px;font-weight:400;letter-spacing:0.0px;color:#000;">Re. Nr. 007</div>
<div class="t" style="left:816.5px;top:366px;font-size:19.33px;font-weight:400;letter-spacing:0.071px;color:#000;">7.513,63 €</div>
<div class="t" style="left:38.8px;top:390px;font-size:19.33px;font-weight:400;letter-spacing:0.107px;color:#000;">15.01.23</div>
<div class="t" style="left:147.8px;top:390px;font-size:19.33px;font-weight:400;letter-spacing:0.071px;color:#000;">2.300,00 €</div>
<div class="t" style="left:311.6px;top:390px;font-size:19.33px;font-weight:400;letter-spacing:0.05px;color:#000;">0,00 €</div>
<div class="t" style="left:469.1px;top:391px;font-size:18.67px;font-weight:400;letter-spacing:-0.75px;color:#000;">xxx</div>
<div class="t" style="left:816.5px;top:390px;font-size:19.33px;font-weight:400;letter-spacing:0.071px;color:#000;">9.813,63 €</div>
<div class="t" style="left:38.8px;top:414px;font-size:19.33px;font-weight:400;letter-spacing:0.107px;color:#000;">19.01.23</div>
<div class="t" style="left:163.8px;top:414px;font-size:19.33px;font-weight:400;letter-spacing:0.107px;color:#000;">500,00 €</div>
<div class="t" style="left:273.6px;top:414px;font-size:19.33px;font-weight:400;letter-spacing:0.071px;color:#000;">2.000,00 €</div>
<div class="t" style="left:458px;top:414px;font-size:19.33px;font-weight:400;letter-spacing:-0.467px;color:#000;">Bank</div>
<div class="t" style="left:805.5px;top:414px;font-size:19.33px;font-weight:400;letter-spacing:0.089px;color:#000;">12.313,63 €</div>
<div class="t" style="left:38.8px;top:438px;font-size:19.33px;font-weight:400;letter-spacing:0.107px;color:#000;">21.01.23</div>
<div class="t" style="left:163.8px;top:438px;font-size:19.33px;font-weight:400;letter-spacing:0.107px;color:#000;">190,00 €</div>
<div class="t" style="left:311.6px;top:438px;font-size:19.33px;font-weight:400;letter-spacing:0.05px;color:#000;">0,00 €</div>
<div class="t" style="left:474.3px;top:439px;font-size:18.67px;font-weight:400;letter-spacing:-0.75px;color:#000;">xxx</div>
<div class="t" style="left:805.5px;top:438px;font-size:19.33px;font-weight:400;letter-spacing:0.089px;color:#000;">12.503,63 €</div>
<div class="t" style="left:38.8px;top:462px;font-size:19.33px;font-weight:400;letter-spacing:0.107px;color:#000;">22.01.23</div>
<div class="t" style="left:174.8px;top:462px;font-size:19.33px;font-weight:400;letter-spacing:0.083px;color:#000;">25,00 €</div>
<div class="t" style="left:311.6px;top:462px;font-size:19.33px;font-weight:400;letter-spacing:0.05px;color:#000;">0,00 €</div>
<div class="t" style="left:474.3px;top:463px;font-size:18.67px;font-weight:400;letter-spacing:-0.75px;color:#000;">xxx</div>
<div class="t" style="left:805.5px;top:462px;font-size:19.33px;font-weight:400;letter-spacing:0.089px;color:#000;">12.528,63 €</div>
<div class="t" style="left:38.8px;top:486px;font-size:19.33px;font-weight:400;letter-spacing:0.107px;color:#000;">23.01.23</div>
<div class="t" style="left:163.8px;top:486px;font-size:19.33px;font-weight:400;letter-spacing:0.107px;color:#000;">980,00 €</div>
<div class="t" style="left:311.6px;top:486px;font-size:19.33px;font-weight:400;letter-spacing:0.05px;color:#000;">0,00 €</div>
<div class="t" style="left:474.3px;top:487px;font-size:18.67px;font-weight:400;letter-spacing:-0.75px;color:#000;">xxx</div>
<div class="t" style="left:805.5px;top:486px;font-size:19.33px;font-weight:400;letter-spacing:0.089px;color:#000;">13.508,63 €</div>
<div class="t" style="left:38.8px;top:510px;font-size:19.33px;font-weight:400;letter-spacing:0.107px;color:#000;">24.01.23</div>
<div class="t" style="left:147.8px;top:510px;font-size:19.33px;font-weight:400;letter-spacing:0.071px;color:#000;">1.150,00 €</div>
<div class="t" style="left:311.6px;top:510px;font-size:19.33px;font-weight:400;letter-spacing:0.05px;color:#000;">0,00 €</div>
<div class="t" style="left:474.3px;top:511px;font-size:18.67px;font-weight:400;letter-spacing:-0.75px;color:#000;">xxx</div>
<div class="t" style="left:805.5px;top:510px;font-size:19.33px;font-weight:400;letter-spacing:0.089px;color:#000;">14.658,63 €</div>
<div class="t" style="left:38.8px;top:534px;font-size:19.33px;font-weight:400;letter-spacing:0.107px;color:#000;">25.01.23</div>
<div class="t" style="left:163.8px;top:534px;font-size:19.33px;font-weight:400;letter-spacing:0.107px;color:#000;">500,00 €</div>
<div class="t" style="left:311.6px;top:534px;font-size:19.33px;font-weight:400;letter-spacing:0.05px;color:#000;">0,00 €</div>
<div class="t" style="left:474.3px;top:535px;font-size:18.67px;font-weight:400;letter-spacing:-0.75px;color:#000;">xxx</div>
<div class="t" style="left:805.5px;top:534px;font-size:19.33px;font-weight:400;letter-spacing:0.089px;color:#000;">15.158,63 €</div>
<div class="t" style="left:805.5px;top:558px;font-size:19.33px;font-weight:400;letter-spacing:0.089px;color:#000;">15.158,63 €</div>
<div class="t" style="left:805.5px;top:582px;font-size:19.33px;font-weight:400;letter-spacing:0.089px;color:#000;">15.158,63 €</div>
<div class="t" style="left:805.5px;top:606px;font-size:19.33px;font-weight:400;letter-spacing:0.089px;color:#000;">15.158,63 €</div>
<div class="t" style="left:805.5px;top:630px;font-size:19.33px;font-weight:400;letter-spacing:0.089px;color:#000;">15.158,63 €</div>
<div class="t" style="left:805.5px;top:654px;font-size:19.33px;font-weight:400;letter-spacing:0.089px;color:#000;">15.158,63 €</div>
<div class="t" style="left:805.5px;top:678px;font-size:19.33px;font-weight:400;letter-spacing:0.089px;color:#000;">15.158,63 €</div>
<div class="t" style="left:805.5px;top:702px;font-size:19.33px;font-weight:400;letter-spacing:0.089px;color:#000;">15.158,63 €</div>
</body></html>
